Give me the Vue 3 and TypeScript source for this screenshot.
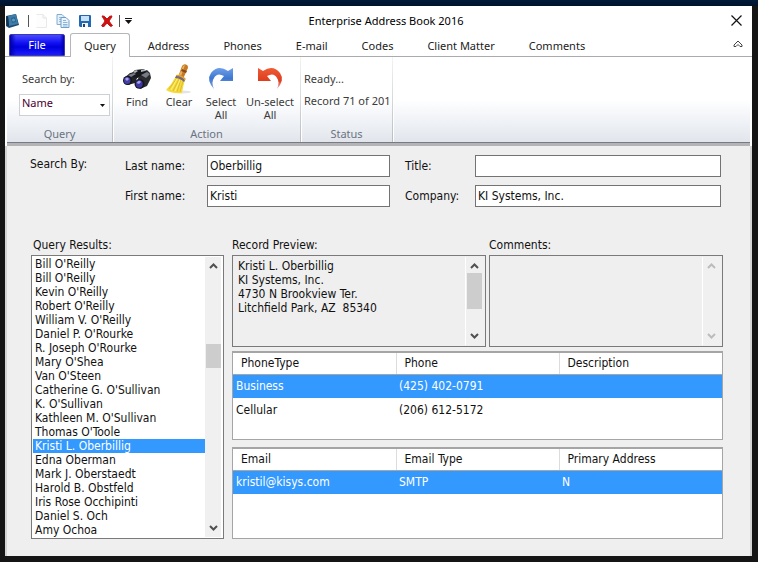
<script setup lang="ts">
import { ref } from 'vue'

interface Person {
  id: number
  name: string
}

const tabs: string[] = ['Query', 'Address', 'Phones', 'E-mail', 'Codes', 'Client Matter', 'Comments']
const activeTab = ref('Query')

const people: Person[] = [
  "Bill O'Reilly",
  "Bill O'Reilly",
  "Kevin O'Reilly",
  "Robert O'Reilly",
  "William V. O'Reilly",
  "Daniel P. O'Rourke",
  "R. Joseph O'Rourke",
  "Mary O'Shea",
  "Van O'Steen",
  "Catherine G. O'Sullivan",
  "K. O'Sullivan",
  "Kathleen M. O'Sullivan",
  "Thomas O'Toole",
  'Kristi L. Oberbillig',
  'Edna Oberman',
  'Mark J. Oberstaedt',
  'Harold B. Obstfeld',
  'Iris Rose Occhipinti',
  'Daniel S. Och',
  'Amy Ochoa',
].map((name, id) => ({ id, name }))

const selectedPerson = ref(13)
const searchField = ref('Name')
const lastName = ref('Oberbillig')
const firstName = ref('Kristi')
const title = ref('')
const company = ref('KI Systems, Inc.')
const preview = 'Kristi L. Oberbillig\nKI Systems, Inc.\n4730 N Brookview Ter.\nLitchfield Park, AZ  85340'

const phones: string[][] = [
  ['Business', '(425) 402-0791', ''],
  ['Cellular', '(206) 612-5172', ''],
]
const emails: string[][] = [['kristil@kisys.com', 'SMTP', 'N']]
const selectedPhone = ref(0)
const selectedEmail = ref(0)
</script>

<template>
  <div class="desktop">
    <div class="window">
      <header class="titlebar">
        <div class="quick">
          <svg class="book" width="13" height="14" viewBox="0 0 13 14">
            <path d="M0 2 L10 0 L13 11 L3 14 L0 12Z" fill="#1d4a70" />
            <path d="M2 2 L10 0 L12 10 L3 12Z" fill="#3f7da8" />
            <path d="M2 2 L3 12 L1 12 L0 3Z" fill="#16324c" />
            <path d="M5 4 L9 3 L10 8 L6 9Z" fill="#2a6390" />
            <circle cx="7.5" cy="6" r="1.5" fill="#5b9cc4" />
          </svg>
          <span class="divider"></span>
          <div class="tools">
            <button class="tool" aria-label="New">
              <svg width="14" height="14" viewBox="0 0 14 14">
                <path d="M2.5 .5H9L12.500 4V13.500H2.500" fill="#fdfdfd" stroke="#e9e9e9" />
                <path d="M9 .5V4H12.500" fill="none" stroke="#e4e4e4" />
              </svg>
            </button>
            <button class="tool" aria-label="Copy">
              <svg width="14" height="14" viewBox="0 0 14 14">
                <path d="M1 .5H6L9 3.500V10.500H1Z" fill="#e4f0fa" stroke="#83acd0" />
                <path d="M3 3.500H6M3 5.500H7M3 7.500H7" stroke="#9dc0df" />
                <path d="M5 3.500H10L13 6.500V13.500H5Z" fill="#eaf4fc" stroke="#6f9fc9" />
                <path d="M7 6.500H10M7 8.500H11.500M7 10.500H11.500M7 12H11.500" stroke="#8bb5da" />
              </svg>
            </button>
            <button class="tool" aria-label="Save">
              <svg width="12" height="12" viewBox="0 0 12 12">
                <path d="M0 1 Q0 0 1 0H11Q12 0 12 1V12H1L0 11Z" fill="#2467b3" />
                <path d="M2 1H10V6H2Z" fill="#c5e2f6" />
                <path d="M3 8H9V12H3Z" fill="#f1f5f9" />
                <path d="M4 9H6V12H4Z" fill="#25435f" />
              </svg>
            </button>
            <button class="tool" aria-label="Delete">
              <svg width="12" height="12" viewBox="0 0 12 12">
                <path d="M1 1 Q3 0 6 4 Q9 0 11 1 Q10.500 3 8 6 Q10 9 11.500 10.500 Q10 12 9 11 L6 8 Q4 11 2 12 Q0 11 1 10 Q3 8 4 6 Q2 3 1 1Z" fill="#cf1111" stroke="#c21515" />
              </svg>
            </button>
          </div>
          <span class="divider"></span>
          <button class="more" aria-label="Customize toolbar">
            <svg width="7" height="6" viewBox="0 0 7 6">
              <path d="M0 0H7V1H0ZM0 2H7L3.500 6Z" fill="#111" />
            </svg>
          </button>
        </div>
        <h1>Enterprise Address Book 2016</h1>
        <button class="close" aria-label="Close">
          <svg width="11" height="11" viewBox="0 0 11 11">
            <path d="M.5 .5L10.500 10.500M10.500 .5L.5 10.500" stroke="#111" stroke-width="1.200" />
          </svg>
        </button>
      </header>

      <nav class="tabs">
        <button class="file">File</button>
        <button
          v-for="tab in tabs"
          :key="tab"
          class="tab"
          :class="{ active: tab === activeTab }"
          @click="activeTab = tab"
        >{{ tab }}</button>
        <button class="collapse" aria-label="Collapse ribbon">
          <svg width="10" height="8" viewBox="0 0 10 8">
            <path d="M5 1 L9 5 V6.500 H7 L5 4.500 L3 6.500 H1 V5Z" fill="#fff" stroke="#444" />
          </svg>
        </button>
      </nav>

      <section class="ribbon">
        <div class="group query">
          <div class="content">
            <label for="search-field">Search by:</label>
            <div class="combo">
              <select id="search-field" v-model="searchField">
                <option>Name</option>
                <option>Company</option>
              </select>
              <svg width="5" height="3" viewBox="0 0 5 3"><path d="M0 0H5L2.500 3Z" fill="#111" /></svg>
            </div>
          </div>
          <span class="caption">Query</span>
        </div>
        <div class="group action">
          <div class="content">
            <button>
              <svg width="30" height="30" viewBox="0 0 30 30">
                <path d="M2 14 L8 9 L13 8 L16 12 L13 19 L6 21 L2 19Z" fill="#222327" />
                <path d="M14 18 L20 8 L25 6 L28 9 L29 14 L25 22 L18 25Z" fill="#292a2e" />
                <path d="M9 10 L13 6 L22 5 L24 8 L16 14 L11 13Z" fill="#17181b" />
                <path d="M6 11 L12 9 L14 10 L9 13Z M19 11 L25 8 L28 10 L24 14Z" fill="#777b84" />
                <path d="M11 8 L14 6 L16 7 L13 9Z M19 6 L23 5 L23 7 L19 8Z" fill="#b2b5bb" />
                <ellipse cx="5.500" cy="16.500" rx="4.500" ry="4.500" fill="#15151b" />
                <ellipse cx="5.200" cy="16.500" rx="3.200" ry="3.500" fill="#4340a8" />
                <path d="M3 15 Q5 12 7 15 L5 17Z" fill="#a3a1e8" />
                <ellipse cx="17.500" cy="20" rx="5" ry="4.800" fill="#15151b" />
                <ellipse cx="17.200" cy="20" rx="3.500" ry="3.700" fill="#3d399f" />
                <path d="M14.500 19 Q17 15 19 18 L17 20Z" fill="#a3a1e8" />
              </svg>
              <span>Find</span>
            </button>
            <button>
              <svg width="30" height="30" viewBox="0 0 30 30">
                <ellipse cx="19" cy="28" rx="8" ry="1.500" fill="#e4e4e8" />
                <path d="M18 2 Q20 -1 23 1 Q25 3 23 6 L19 15 L14 13Z" fill="#c77a24" />
                <path d="M19 2 L21 1 L17 12 L15 11Z" fill="#ecb25c" />
                <path d="M18 5 L23 7 L22 9 L17 7Z" fill="#874b1b" />
                <path d="M12 12 Q17 11 21 16 Q19 22 18 29 Q9 30 2 26 Q8 20 12 12Z" fill="#f5da3c" />
                <path d="M13 14 L5 25 M15 15 L9 27 M17 15 L13 28 M19 17 L16 28" stroke="#d3b025" stroke-width=".7" />
                <path d="M13 15 L7 26 M16 16 L11 27" stroke="#fff27c" />
                <path d="M12 12 Q17 11 21 16 L20 18 Q16 14 11 14Z" fill="#776487" />
                <path d="M12 11 Q17 10 22 15 L21 16 Q17 12 12 12Z" fill="#dba52d" />
              </svg>
              <span>Clear</span>
            </button>
            <button>
              <svg width="30" height="30" viewBox="0 0 30 30">
                <defs>
                  <linearGradient id="blue-arrow" x1="0" y1="0" x2="0" y2="1">
                    <stop offset="0" stop-color="#6f9fe8" />
                    <stop offset=".5" stop-color="#3d77d1" />
                    <stop offset="1" stop-color="#86a5d8" />
                  </linearGradient>
                </defs>
                <path d="M8 25 Q0 16 5 9 Q12 0 22 7 L27 4 V17 H14 L18 12 Q11 8 8 14 Q5 18 8 25Z" fill="url(#blue-arrow)" />
              </svg>
              <span>Select All</span>
            </button>
            <button class="wide">
              <svg width="30" height="30" viewBox="0 0 30 30">
                <defs>
                  <linearGradient id="red-arrow" x1="0" y1="0" x2="0" y2="1">
                    <stop offset="0" stop-color="#f05b35" />
                    <stop offset=".6" stop-color="#dd3e1f" />
                    <stop offset="1" stop-color="#e9aab1" />
                  </linearGradient>
                </defs>
                <path d="M22 25 Q30 16 25 9 Q18 0 8 7 L3 4 V17 H16 L12 12 Q19 8 22 14 Q25 18 22 25Z" fill="url(#red-arrow)" />
              </svg>
              <span>Un-select All</span>
            </button>
          </div>
          <span class="caption">Action</span>
        </div>
        <div class="group status">
          <div class="content">
            <p>Ready...</p>
            <p>Record 71 of 201</p>
          </div>
          <span class="caption">Status</span>
        </div>
      </section>

      <main>
        <form class="search" @submit.prevent>
          <span class="lead">Search By:</span>
          <label for="last-name">Last name:</label>
          <input id="last-name" v-model="lastName" type="text" />
          <label class="second" for="title">Title:</label>
          <input id="title" v-model="title" type="text" />
          <label class="first" for="first-name">First name:</label>
          <input id="first-name" v-model="firstName" type="text" />
          <label class="second" for="company">Company:</label>
          <input id="company" v-model="company" type="text" />
        </form>

        <div class="results">
          <div class="pane people">
            <label for="people">Query Results:</label>
            <div class="box list">
              <select id="people" v-model="selectedPerson" size="20">
                <option v-for="person in people" :key="person.id" :value="person.id">{{ person.name }}</option>
              </select>
              <div class="scroll">
                <svg width="9" height="6" viewBox="0 0 9 6"><path d="M1 5L4.500 1.500L8 5" /></svg>
                <i class="thumb middle"></i>
                <svg width="9" height="6" viewBox="0 0 9 6"><path d="M1 1L4.500 4.500L8 1" /></svg>
              </div>
            </div>
          </div>

          <div class="details">
            <div class="notes">
              <div class="pane">
                <label for="preview">Record Preview:</label>
                <div class="box grey">
                  <textarea id="preview" readonly :value="preview"></textarea>
                  <div class="scroll">
                    <svg width="9" height="6" viewBox="0 0 9 6"><path d="M1 5L4.500 1.500L8 5" /></svg>
                    <i class="thumb top"></i>
                    <svg width="9" height="6" viewBox="0 0 9 6"><path d="M1 1L4.500 4.500L8 1" /></svg>
                  </div>
                </div>
              </div>
              <div class="pane">
                <label for="comments">Comments:</label>
                <div class="box grey">
                  <textarea id="comments" readonly></textarea>
                  <div class="scroll disabled">
                    <svg width="9" height="6" viewBox="0 0 9 6"><path d="M1 5L4.500 1.500L8 5" /></svg>
                    <svg width="9" height="6" viewBox="0 0 9 6"><path d="M1 1L4.500 4.500L8 1" /></svg>
                  </div>
                </div>
              </div>
            </div>

            <div class="grid phones">
              <table>
                <thead>
                  <tr><th>PhoneType</th><th>Phone</th><th>Description</th></tr>
                </thead>
                <tbody>
                  <tr v-for="(row, i) in phones" :key="i" :class="{ selected: i === selectedPhone }" @click="selectedPhone = i">
                    <td v-for="(cell, j) in row" :key="j">{{ cell }}</td>
                  </tr>
                </tbody>
              </table>
            </div>
            <div class="grid emails">
              <table>
                <thead>
                  <tr><th>Email</th><th>Email Type</th><th>Primary Address</th></tr>
                </thead>
                <tbody>
                  <tr v-for="(row, i) in emails" :key="i" :class="{ selected: i === selectedEmail }" @click="selectedEmail = i">
                    <td v-for="(cell, j) in row" :key="j">{{ cell }}</td>
                  </tr>
                </tbody>
              </table>
            </div>
          </div>
        </div>
      </main>
    </div>
  </div>
</template>

<style>
body {
  background: #151515;
}
</style>

<style scoped>
* {
  box-sizing: border-box;
}
.desktop {
  min-height: 100vh;
  padding: 6px 6px 6px 5px;
  display: flex;
  background: linear-gradient(#001a3a, #00122b) top / 100% 6px no-repeat #151515;
  font: 11px/14px "Noto Sans", sans-serif;
  color: #222;
}
.window {
  flex: 1;
  min-width: 0;
  display: flex;
  flex-direction: column;
  background: #fff;
}
button {
  font: inherit;
  color: inherit;
  border: 0;
  background: none;
  padding: 0;
}
svg {
  display: block;
}
.titlebar {
  display: grid;
  grid-template-columns: 1fr auto 1fr;
  align-items: center;
  height: 27px;
  padding: 2px 10px 0 1px;
}
h1 {
  margin: 0;
  padding-left: 24px;
  font-size: 11px;
  font-weight: 400;
  color: #000;
}
.quick {
  display: flex;
  align-items: center;
}
.divider {
  width: 1px;
  height: 12px;
  background: #555;
}
.book {
  margin-right: 9px;
}
.tools {
  display: flex;
  padding: 0 1px;
}
.tool {
  width: 22px;
  height: 16px;
  display: grid;
  place-items: center;
}
.more {
  margin-left: 5px;
}
.close {
  justify-self: end;
}
.tabs {
  display: flex;
  height: 24px;
  padding-left: 4px;
  box-shadow: inset 0 -1px #a9abae;
}
.file {
  width: 56px;
  height: 22px;
  margin: 1px 5px 0 0;
  border: 1px solid #3a3ab4;
  border-radius: 2px 2px 0 0;
  color: #fff;
  background: linear-gradient(90deg, #0000a8 0, transparent 6px, transparent 50px, #0000a8), linear-gradient(#4b4bff, #1010f4 40%, #0000dc 60%, #1c1cff);
}
.tab {
  padding: 2px 17px 0;
  white-space: nowrap;
}
.tab.active {
  margin-right: 1px;
  padding: 1px 13px 0;
  border: 1px solid #b4b6b9;
  border-bottom: 0;
  border-radius: 3px 3px 0 0;
  background: #fff;
}
.collapse {
  margin: 0 9px 3px auto;
}
.ribbon {
  display: flex;
  margin: 0 2px;
  height: 89px;
  border-bottom: 3px solid #b4b4b6;
  box-shadow: inset 0 -1px #767b84;
  background: linear-gradient(#fff 50%, #f5f7fa 65%, #e1e5eb);
  color: #3b3b3b;
}
.group {
  display: flex;
  flex-direction: column;
  margin-bottom: 1px;
  border-right: 1px solid;
  border-image: linear-gradient(#f4f4f4, #b8bcc3) 1;
  box-shadow: 1px 0 #fff;
}
.group .content {
  flex: 1;
}
.caption {
  height: 17px;
  line-height: 17px;
  text-align: center;
  color: #6b7380;
}
.query {
  width: 106px;
}
.query .content {
  padding: 0 2px 0 12px;
}
.query label {
  display: block;
  padding: 15px 3px 8px;
}
.combo {
  position: relative;
}
.combo select {
  appearance: none;
  display: block;
  width: 100%;
  height: 22px;
  padding: 0 2px 5px;
  border: 1px solid #cdd0d4;
  border-radius: 0;
  background: #fff;
  font: inherit;
  color: #4a0030;
}
.combo svg {
  position: absolute;
  right: 5px;
  top: 10px;
  pointer-events: none;
}
.action {
  width: 188px;
}
.action .content {
  display: flex;
  align-items: flex-start;
  padding: 7px 2px 0 3px;
}
.action button {
  width: 42px;
  line-height: 13px;
}
.action button.wide {
  width: 56px;
}
.action svg {
  margin: 0 auto 1px;
}
.action span {
  display: block;
}
.status {
  width: 92px;
  white-space: nowrap;
}
.status .content {
  padding: 15px 0 0 3px;
}
.status p {
  margin: 0 0 8px;
}
main {
  flex: 1;
  padding: 9px 27px 17px 23px;
  border: solid #d4d4d4;
  border-width: 0 2px;
  background: #efefef;
  font: 12px/14px "DejaVu Sans Condensed", "DejaVu Sans", sans-serif;
  color: #111;
}
.search {
  display: grid;
  grid-template-columns: 95px 82px minmax(0, 183fr) 85px minmax(0, 246fr);
  gap: 8px 0;
  align-items: center;
  padding-right: 2px;
}
.search .first {
  grid-column: 2;
}
.search .lead {
  padding-bottom: 5px;
}
.search .second {
  padding-left: 15px;
}
.search input {
  min-width: 0;
  height: 22px;
  padding: 0 2px;
  border: 1px solid #737373;
  background: #fff;
  font: inherit;
  color: inherit;
}
.results {
  display: grid;
  grid-template-columns: minmax(0, 193fr) minmax(0, 491fr);
  gap: 8px;
  margin: 31px 0 0 1px;
}
.pane {
  display: flex;
  flex-direction: column;
}
.pane > label {
  padding-bottom: 3px;
}
.people > label {
  padding-left: 2px;
}
.box {
  display: flex;
  border: 1px solid #7a7a7a;
  background: #fff;
}
.box.grey {
  height: 92px;
  background: #efefef;
  padding: 1px;
}
.list {
  padding: 1px 2px 1px 1px;
}
.list select {
  flex: 1;
  min-width: 0;
  height: 280px;
  padding: 0;
  border: 0;
  outline: 0;
  overflow: hidden;
  background: #fff;
  font: inherit;
  color: inherit;
}
.list option {
  height: 14px;
  min-height: 14px;
  padding: 0 2px;
  line-height: 14px;
}
.list option:checked {
  background: #39f linear-gradient(#39f, #39f);
  color: #fff;
}
.scroll {
  flex: none;
  width: 16px;
  display: flex;
  flex-direction: column;
  align-items: center;
  padding: 6px 0;
  background: #f0f0f0;
}
.grey .scroll {
  width: 19px;
  padding-right: 1px;
  border-left: 1px solid #fff;
}
.scroll path {
  fill: none;
  stroke: #505050;
  stroke-width: 2;
}
.scroll.disabled path {
  stroke: #bcbcbc;
}
.scroll svg:last-child {
  margin-top: auto;
}
.thumb {
  width: 15px;
  background: #cdcdcd;
}
.thumb.top {
  height: 36px;
  margin-top: 4px;
}
.thumb.middle {
  height: 24px;
  margin-top: 75px;
}
textarea {
  flex: 1;
  min-width: 0;
  padding: 2px 4px;
  border: 0;
  outline: 0;
  resize: none;
  overflow: hidden;
  background: transparent;
  font: inherit;
  color: inherit;
}
.notes {
  display: grid;
  grid-template-columns: minmax(0, 254fr) minmax(0, 234fr);
  gap: 3px;
}
.grid {
  border: 1px solid #a5a5a5;
  border-top-width: 2px;
  background: #fff;
}
.phones {
  height: 89px;
  margin-top: 4px;
}
.emails {
  height: 92px;
  margin-top: 7px;
}
table {
  width: 100%;
  table-layout: fixed;
  border-collapse: collapse;
}
th {
  height: 21px;
  padding: 0 0 0 8px;
  border-bottom: 1px solid #a5a5a5;
  font-weight: 400;
  text-align: left;
}
th + th {
  border-left: 1px solid #dcdcdc;
}
td {
  height: 24px;
  padding: 0 3px;
}
.selected {
  background: #39f;
  color: #fff;
}
</style>
